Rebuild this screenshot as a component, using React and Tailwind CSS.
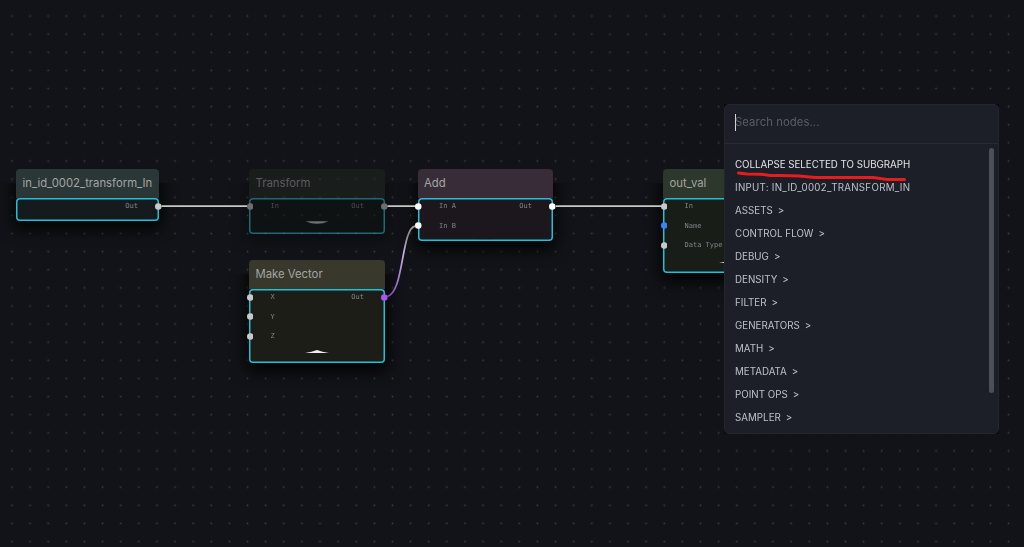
const MONO = "font-['DejaVu_Sans_Mono',monospace]";

function Port({ label, color, side, active }) {
  const place = side === 'out' ? '-right-[2.500px]' : '-left-[2.500px]';
  const fill = color || (active ? 'fill-white' : 'fill-[#c9c9c9]');
  return (
    <span className={`flex-1 flex ${side === 'out' ? 'justify-end pr-[21px]' : 'pl-[21.500px]'}`}>
      <svg className={`absolute top-[6px] ${place} ${fill}`} width="6.500" height="7" viewBox="0 0 6.5 7">
        <circle cx="3.25" cy="3.5" r="3.25" />
      </svg>
      {label}
    </span>
  );
}

function Node({ title, place, header, body, rows, active, arrow, faded }) {
  return (
    <section className={`absolute flex flex-col ${place} ${faded ? 'opacity-50' : ''}`}>
      <div className={`absolute inset-0 rounded-[5px] ${faded ? 'shadow-[0_4px_15px_4px_rgba(0,0,0,0.6)]' : 'shadow-[0_6px_15px_3px_rgba(0,0,0,0.8)]'} [clip-path:inset(14px_-30px_-30px_-30px)]`} />
      <header className={`relative h-[29px] shrink-0 rounded-t-[4px] pl-[6.5px] text-[11.3px] leading-[28px] whitespace-nowrap text-[#a3a5a5] ${header}`}>
        {title}
      </header>
      <div className={`relative flex-1 rounded-[4px] shadow-[inset_0_0_0_1.5px_#22bfd9] pt-px text-[7px] text-[#82838b] ${MONO} ${body}`}>
        {rows.map((r, i) => (
          <div key={i} className="relative -mt-[2px] mb-[2px] flex h-[19.4px] items-center">
            {r.in && <Port side="in" label={r.in} color={r.color} active={active} />}
            {r.out && <Port side="out" label={r.out} color={r.outColor} active={active} />}
          </div>
        ))}
        {arrow}
      </div>
    </section>
  );
}

const dash = <span className="absolute bottom-[1px] left-1/2 h-[1px] w-[14px] -translate-x-1/2 bg-[#27616b]" />;
const up = (
  <svg className="absolute bottom-[10px] left-1/2 -translate-x-1/2" width="24" height="3" viewBox="0 0 24 3">
    <path d="M0 3Q7 2 12 .1Q17 2 24 3Z" fill="#f1f1ea" />
  </svg>
);
const down = (
  <svg className="absolute bottom-[10px] left-1/2 -translate-x-1/2" width="23" height="3" viewBox="0 0 23 3">
    <path d="M0 .2H23Q11.5 5.2 0 .2Z" fill="#ccd0ca" />
  </svg>
);

const categories = ['ASSETS', 'CONTROL FLOW', 'DEBUG', 'DENSITY', 'FILTER', 'GENERATORS', 'MATH', 'METADATA', 'POINT OPS', 'SAMPLER'];

export default function App() {
  return (
    <main className="relative h-[547px] w-[1024px] overflow-hidden bg-[#121318] font-['Inter',sans-serif]">
      <svg className="absolute inset-0" width="1024" height="547">
        <defs>
          <pattern id="grid" x="2.9" y="7" width="18.12" height="18.12" patternUnits="userSpaceOnUse">
            <circle cx="9.06" cy="9.06" r="0.95" fill="#393b40" />
          </pattern>
        </defs>
        <rect width="1024" height="547" fill="url(#grid)" />
      </svg>

      <Node title="in_id_0002_transform_In" place="left-[16px] top-[169px] w-[143px] h-[52px]" header="bg-[#2b3636]" body="bg-[#151b1d]" rows={[{ out: 'Out' }]} arrow={dash} />
      <Node title="Transform" place="left-[249px] top-[169px] w-[136px] h-[65px]" header="bg-[#202820]" body="bg-[#0d120e]" rows={[{ in: 'In', out: 'Out' }]} arrow={down} faded />
      <Node title="Make Vector" place="left-[249px] top-[260px] w-[136px] h-[103px]" header="bg-[#38382c]" body="bg-[#1c1d17]" rows={[{ in: 'X', out: 'Out', outColor: 'fill-[#a855f7]' }, { in: 'Y' }, { in: 'Z' }]} arrow={up} />
      <Node title="Add" place="left-[417.5px] top-[169px] w-[135.5px] h-[71.5px]" header="bg-[#382c38]" body="bg-[#1c161d]" rows={[{ in: 'In A', out: 'Out' }, { in: 'In B' }]} arrow={dash} active />
      <Node title="out_val" place="left-[663px] top-[169px] w-[136px] h-[103.5px]" header="bg-[#2e372c]" body="bg-[#181d17]" rows={[{ in: 'In' }, { in: 'Name', color: 'fill-[#3b82f6]' }, { in: 'Data Type' }]} arrow={up} />

      <svg className="absolute inset-0" width="1024" height="547" fill="none" strokeWidth="1.7">
        <defs>
          <linearGradient id="vec" gradientUnits="userSpaceOnUse" x1="384" y1="296" x2="418" y2="226">
            <stop stopColor="#7e45b5" />
            <stop offset=".25" stopColor="#a878cf" />
            <stop offset=".6" stopColor="#cbb0df" />
            <stop offset=".85" stopColor="#8f8792" />
            <stop offset="1" stopColor="#aaa5aa" />
          </linearGradient>
        </defs>
        <path d="M161.500 206.1H247M387.500 206.1H415M556 206.1H661" stroke="#c8c8c5" />
        <path d="M387 296.500C404 294 401 229 415 226.200" stroke="url(#vec)" />
      </svg>

      <div className="absolute left-[724px] top-[104px] h-[330px] w-[275px] rounded-[2px] bg-[#07080a]">
        <aside className="flex h-full flex-col overflow-hidden rounded-[5px] border border-[#24262e] bg-[#1c1e28]">
          <div className="flex h-[39px] shrink-0 items-center border-b border-[#292b34] pl-[10px] pb-[3px]">
            <span className="h-[17px] w-px bg-[#d5d6d8]" />
            <span className="-ml-px -mt-px text-[11.3px] tracking-[0.08px] text-[#5b5d66]">Search nodes...</span>
          </div>
          <div className="flex flex-1 justify-between pl-[10px] pr-[4px] pt-[5px]">
            <ul className="pt-[4.600px] text-[9.75px] tracking-[0.02px] whitespace-nowrap text-[#bcc0ca]">
              <li className="flex h-[23.05px] items-center text-[#e4e5e7]"><span className="tracking-[-0.02px]">COLLAPSE SELECTED TO SUBGRAPH</span></li>
              <li className="flex h-[23.05px] items-center tracking-[0.27px]">INPUT: IN_ID_0002_TRANSFORM_IN</li>
              {categories.map((c) => (
                <li key={c} className="flex h-[23.05px] items-center gap-[5px]">
                  {c}<span>&gt;</span>
                </li>
              ))}
            </ul>
            <div className="-mt-px h-[244.500px] w-[5.500px] rounded-full bg-[#4c4f58]" />
          </div>
        </aside>
      </div>
      <svg className="absolute left-[736px] top-[168px]" width="174" height="16" fill="none">
        <path d="M2.500 5L11 6L25 6.200L34 7.500H45L63 8L79 9.500H137L151 11.500H168.500" stroke="#e51d1e" strokeWidth="3" strokeLinecap="round" strokeLinejoin="round" />
      </svg>
    </main>
  );
}
